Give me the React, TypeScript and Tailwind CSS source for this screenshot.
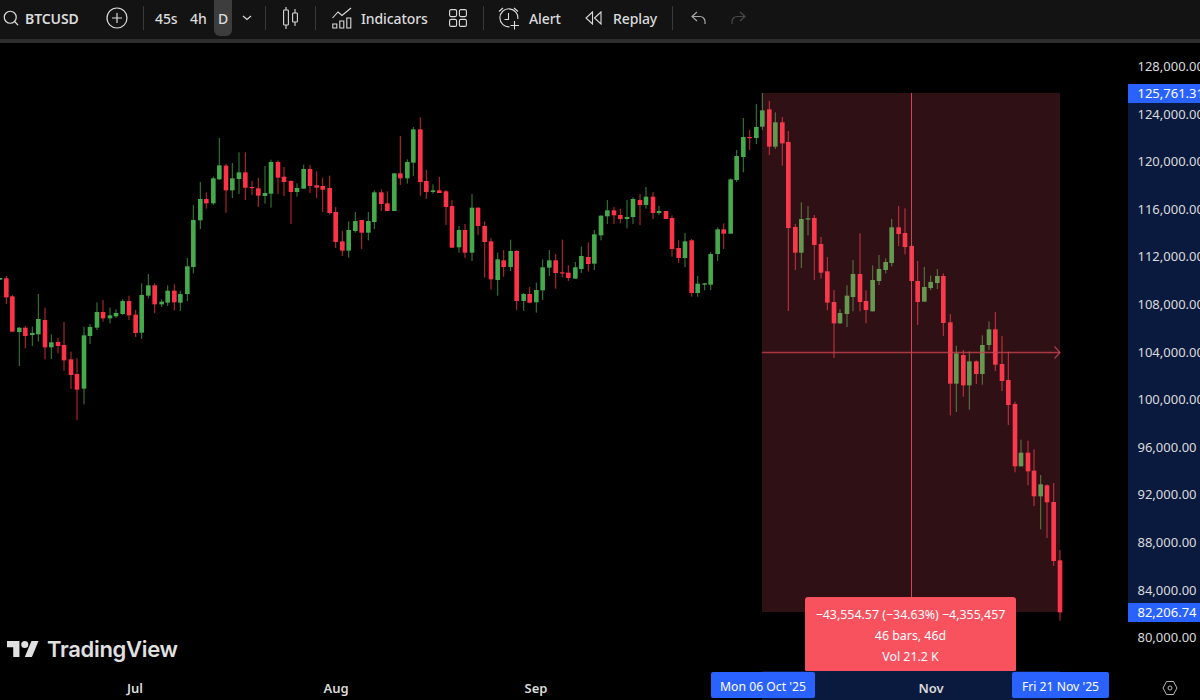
import { Search } from 'lucide-react'

type Candle = [number, 'g' | 'r', number, number, number, number]

// x, colour, wick high, body top, body bottom, wick low. Values are measured on
// 3x crops of the chart, so every group has its own crop origin.
const GROUPS: { ox: number; oy: number; rows: Candle[] }[] = [
  { ox: 0, oy: 250, rows: [
    [0,'g',84,84,89,90],[19,'r',78,85,142,162],[37,'r',135,139,245,245],[58,'g',232,233,246,348],
    [76,'r',228,233,258,295],[97,'g',230,249,255,288],[115,'g',132,207,253,275],[135,'r',173,210,292,328],
    [154,'g',253,277,292,327],[174,'r',264,276,288,310],[192,'r',216,285,331,362],[213,'r',305,328,375,417],
    [231,'r',325,372,419,510],[252,'g',230,256,416,463],[270,'g',222,231,258,282],[291,'g',157,186,233,240],
    [309,'r',150,186,205,215],[330,'g',173,196,205,220],[348,'g',178,189,199,204],[368,'g',148,153,192,195],
    [387,'r',137,153,196,210],[407,'r',180,194,249,261],[425,'g',100,135,248,267],[445,'g',72,106,137,145],
    [464,'r',100,106,163,189],[485,'g',148,155,163,171],[503,'g',106,122,158,168],[523,'r',103,122,157,181],
    [541,'g',122,132,158,183],[562,'g',24,49,132,153],
  ] },
  { ox: 180, oy: 110, rows: [
    [40,'g',285,330,471,490],[61,'g',216,267,331,357],[79,'r',247,267,280,296],[100,'g',200,205,280,285],
    [118,'g',84,166,208,210],[138,'r',162,167,241,308],[157,'g',159,205,241,264],[177,'g',127,187,207,252],
    [196,'r',127,187,233,270],[216,'r',213,231,233,255],[235,'r',204,235,257,291],[255,'g',168,249,258,281],
    [273,'g',149,156,251,293],[294,'r',151,156,203,252],[312,'r',171,200,216,258],[333,'r',211,213,246,342],
    [351,'g',220,234,246,260],[371,'g',164,177,236,236],[390,'r',165,177,228,249],[410,'r',184,226,233,264],
    [428,'r',203,228,239,306],[449,'r',197,234,309,314],[467,'r',291,306,396,414],[487,'r',363,394,422,438],
    [506,'g',334,360,422,443],[526,'g',306,333,363,368],[545,'r',330,330,368,417],[565,'g',306,333,368,391],
    [583,'g',241,247,336,357],
  ] },
  { ox: 370, oy: 110, rows: [
    [34,'r',238,247,282,303],[52,'r',244,280,303,303],[73,'g',190,190,303,303],[91,'r',78,190,205,225],
    [112,'g',148,156,205,221],[130,'g',51,58,158,198],[151,'r',22,58,216,257],[169,'r',180,213,246,267],
    [189,'g',223,241,246,251],[208,'r',201,241,249,249],[228,'r',240,244,291,345],[246,'r',270,288,413,414],
    [267,'g',348,360,412,428],[285,'r',342,360,428,444],[306,'g',252,293,428,453],[324,'r',292,293,348,375],
    [344,'r',334,348,396,503],[363,'r',384,394,508,539],[383,'g',428,448,510,557],[401,'r',420,451,471,500],
    [422,'g',389,423,471,483],[440,'r',420,423,573,600],[461,'g',549,552,573,603],[479,'r',531,552,578,580],
    [499,'g',518,540,577,608],[518,'g',448,472,541,570],[538,'g',420,451,473,498],[557,'r',432,451,489,536],
    [577,'r',389,487,489,502],[595,'r',466,488,504,513],
  ] },
  { ox: 560, oy: 90, rows: [
    [46,'g',516,532,566,566],[64,'g',470,498,537,549],[85,'r',457,501,522,544],[103,'g',420,433,521,540],
    [123,'g',376,377,436,451],[142,'g',330,361,379,402],[162,'r',351,361,376,402],[181,'r',356,375,387,400],
    [201,'g',330,381,387,415],[219,'g',322,327,381,402],[240,'r',312,330,345,405],[258,'g',291,320,345,356],
    [279,'r',306,320,369,387],[297,'g',348,363,369,375],[318,'r',363,363,387,387],[336,'r',376,384,477,500],
    [356,'r',451,474,504,519],[375,'g',429,454,504,531],[395,'r',447,451,609,620],[413,'g',558,581,609,620],
    [434,'g',579,580,584,601],[452,'g',486,492,584,600],[473,'g',412,418,492,513],[491,'r',400,418,431,477],
    [512,'g',265,268,431,431],[530,'g',180,198,270,276],[550,'g',84,141,201,247],[569,'r',120,141,144,180],
    [589,'g',42,111,144,162],
  ] },
  { ox: 755, oy: 90, rows: [
    [22,'g',9,61,110,120],[43,'r',33,58,170,195],[61,'g',67,97,170,177],[82,'r',81,97,160,227],
    [100,'r',123,156,414,663],[121,'r',402,411,488,540],[139,'g',337,387,488,534],[159,'g',348,385,387,436],
    [178,'r',375,384,465,570],[198,'r',441,462,548,566],[217,'r',501,544,638,661],[237,'r',600,636,700,804],
    [255,'g',658,669,700,702],[276,'g',586,617,672,711],[294,'g',510,552,621,664],[315,'r',430,552,636,664],
    [333,'r',601,633,660,700],[353,'g',526,570,664,664],[372,'g',495,537,573,585],[392,'g',505,516,540,550],
    [410,'g',387,412,519,529],[431,'r',348,412,432,468],[450,'r',355,429,471,493],[470,'r',462,468,573,573],
    [488,'r',513,573,636,705],
  ] },
  { ox: 910, oy: 220, rows: [
    [43,'g',141,201,245,245],[62,'g',167,186,204,210],[82,'g',147,168,189,207],[100,'r',160,168,309,348],
    [121,'r',282,307,491,586],[139,'g',377,400,491,576],[160,'r',390,405,496,530],[178,'g',394,424,496,569],
    [199,'r',421,424,462,492],[217,'g',346,375,462,494],[237,'g',304,328,375,390],[256,'r',276,328,434,453],
    [276,'r',348,432,483,513],[295,'r',395,480,555,615],
  ] },
  { ox: 1000, oy: 390, rows: [
    [45,'r',35,42,229,247],[63,'g',149,188,229,229],[84,'r',152,188,244,286],[102,'r',178,242,319,348],
    [122,'g',255,283,319,418],[141,'r',283,286,337,444],[161,'r',279,336,513,528],[180,'r',480,511,667,692],
  ] },
]

const CANDLES = GROUPS.flatMap(g =>
  g.rows.map(([x, c, hi, top, bot, lo]) => ({
    x: g.ox + x / 3,
    color: c,
    hi: g.oy + hi / 3,
    top: g.oy + top / 3,
    bot: g.oy + bot / 3,
    lo: g.oy + lo / 3,
  })),
)

const PRICES = ['128,000.00','124,000.00','120,000.00','116,000.00','112,000.00','108,000.00','104,000.00','100,000.00','96,000.00','92,000.00','88,000.00','84,000.00','80,000.00']

function Divider({ className }: { className: string }) {
  return <div className={`h-6 w-px shrink-0 bg-[#3a3a3a] ${className}`} />
}

function Toolbar() {
  return (
    <div className="flex h-[39px] shrink-0 items-center bg-[#131313] pb-[3px] pl-[3px] text-[14px] tracking-[-0.1px] text-[#dbdbdb]">
      <Search size={18} strokeWidth={1.6} className="-ml-px h-[18px] w-[18px] shrink-0" />
      <span className="ml-[5px] w-[54px] shrink-0 font-semibold">BTCUSD</span>
      <svg viewBox="0 0 22 22" className="ml-[27px] h-[22px] w-[22px] shrink-0" fill="none" stroke="currentColor" strokeWidth="1.2">
        <circle cx="11" cy="11" r="10" />
        <path d="M11 6v10M6 11h10" />
      </svg>
      <Divider className="ml-[15px]" />
      <span className="ml-[11px] w-[21px] shrink-0 font-medium">45s</span>
      <span className="ml-[14px] w-[15px] shrink-0 font-medium">4h</span>
      <span className="ml-[9px] flex h-9 w-[18px] shrink-0 items-center justify-center self-start rounded-b-md bg-[#3d3d3d] font-medium">D</span>
      <svg viewBox="0 0 10 6" className="ml-[10px] h-[6px] w-[10px] shrink-0" fill="none" stroke="currentColor" strokeWidth="1.2">
        <path d="M1 1l4 3.5L9 1" />
      </svg>
      <Divider className="ml-[13px]" />
      <svg viewBox="0 0 15 24" className="ml-[17px] h-6 w-[15px] shrink-0" fill="none" stroke="currentColor" strokeWidth="1.1">
        <rect x="0.6" y="4" width="4.8" height="15" rx="0.8" />
        <path d="M3 1v3M3 19v4" />
        <rect x="9.6" y="7" width="4.8" height="9" rx="0.8" />
        <path d="M12 3v4M12 16v4" />
      </svg>
      <Divider className="ml-[17px]" />
      <svg viewBox="0 0 20 22" className="ml-[16px] h-[22px] w-5 shrink-0" fill="none" stroke="currentColor" strokeWidth="1.1">
        <path d="M0.5 11l5.5-6 4 3.5L19 1" />
        <path d="M0.8 21v-4h4v4zM7.8 21v-7h4v7zM14.8 21v-10h4v10z" />
      </svg>
      <span className="ml-[9px] w-[66px] shrink-0 font-medium">Indicators</span>
      <svg viewBox="0 0 18 18" className="ml-[22px] h-[18px] w-[18px] shrink-0" fill="none" stroke="currentColor" strokeWidth="1.1">
        <rect x="0.6" y="0.6" width="7" height="7" rx="1.5" />
        <rect x="10.4" y="0.6" width="7" height="7" rx="1.5" />
        <rect x="0.6" y="10.4" width="7" height="7" rx="1.5" />
        <rect x="10.4" y="10.4" width="7" height="7" rx="1.5" />
      </svg>
      <Divider className="ml-[16px]" />
      <svg viewBox="0 0 22 24" className="ml-[14px] h-6 w-[22px] shrink-0" fill="none" stroke="currentColor" strokeWidth="1.1">
        <path d="M11.5 20.8A9 9 0 1 1 19.8 13" />
        <path d="M10.5 7v6.5H6.5M1 5.5L5 2M20 5.5L16 2M16.5 15v8.5M12.5 19.5h8.5" />
      </svg>
      <span className="ml-[9px] w-[33px] shrink-0 font-medium">Alert</span>
      <svg viewBox="0 0 17 14" className="ml-[23px] h-[14px] w-[17px] shrink-0" fill="none" stroke="currentColor" strokeWidth="1.1">
        <path d="M7.5 1L1 7l6.5 6zM16 1L9.5 7l6.5 6z" />
      </svg>
      <span className="ml-[11px] w-[44px] shrink-0 font-medium">Replay</span>
      <Divider className="ml-[15px]" />
      <svg viewBox="0 0 15 14" className="ml-[18px] h-[14px] w-[15px] shrink-0 text-[#a8a8a8]" fill="none" stroke="currentColor" strokeWidth="1.2">
        <path d="M6 1L1 5.5 6 10M1 5.5h8a5 5 0 0 1 5 5V13" />
      </svg>
      <svg viewBox="0 0 15 14" className="ml-[25px] h-[14px] w-[15px] shrink-0 text-[#4a4a4a]" fill="none" stroke="currentColor" strokeWidth="1.2">
        <path d="M9 1l5 4.5L9 10M14 5.5H6a5 5 0 0 0-5 5V13" />
      </svg>
    </div>
  )
}

function Chart() {
  return (
    <svg viewBox="0 43 1128 628" className="h-full w-full">
      {CANDLES.map((c, i) => {
        const fill = c.color === 'g' ? '#46a94c' : '#ff3347'
        return (
          <g key={i} fill={fill}>
            <rect x={c.x - 0.55} y={c.hi} width="1.1" height={c.lo - c.hi} opacity="0.72" />
            <rect x={c.x - 2.3} y={c.top} width="4.6" height={Math.max(c.bot - c.top, 1.2)} />
          </g>
        )
      })}
      {/* measure tool */}
      <rect x="762" y="93" width="298" height="519" fill="#ec5569" opacity="0.2" />
      <path d="M911.5 93V597" stroke="#e8505e" strokeWidth="1" opacity="0.85" />
      <path d="M762 352.5H1060" stroke="#c9424f" strokeWidth="1.6" opacity="0.8" />
      <path d="M1054.5 346.5l5.5 6-5.5 6" fill="none" stroke="#c9424f" strokeWidth="1.2" opacity="0.85" />
    </svg>
  )
}

export default function App() {
  return (
    <div className="flex h-[700px] w-[1200px] flex-col overflow-hidden bg-black font-['Noto_Sans',sans-serif]">
      <Toolbar />
      <div className="h-1 shrink-0 bg-[#2e2e2e]" />

      <div className="relative flex h-[628px] shrink-0">
        <div className="relative w-[1128px] shrink-0">
          <Chart />
          <div className="absolute left-[7px] top-[595px] flex items-center gap-[8px] text-[#e0e0e0]">
            <svg viewBox="0 0 36 18" className="h-4 w-8" fill="currentColor">
              <path d="M14 18H7V7H0V0h14zM28 18h-8L27.5 0h8z" />
              <circle cx="20" cy="4" r="4" />
            </svg>
            <span className="font-['Inter',sans-serif] text-[22px] font-semibold leading-none tracking-[-0.3px]">TradingView</span>
          </div>
        </div>

        <div className="relative w-[72px] shrink-0 overflow-hidden">
          <div className="absolute left-0 right-0 top-[60px] h-[500px] bg-[#0a1a3f]" />
          <div className="relative flex flex-col pl-[9.5px] text-[13px] text-[#dbdbdb]">
            {PRICES.map(p => (
              <div key={p} className="flex h-[47.6px] items-center whitespace-nowrap">{p}</div>
            ))}
          </div>
          <div className="absolute left-0 right-0 top-[41px] flex h-[19px] items-center whitespace-nowrap bg-[#2962ff] pl-[9.5px] text-[13px] text-white">125,761.31</div>
          <div className="absolute left-0 right-0 top-[560px] flex h-[19px] items-center whitespace-nowrap bg-[#2962ff] pl-[9.5px] text-[13px] text-white">82,206.74</div>
        </div>

        <div className="absolute left-[805px] top-[554px] flex h-[75px] w-[211px] flex-col justify-center gap-[2px] rounded-[3px] bg-[#f9525f] pt-px text-center text-[12.4px] leading-[19px] text-white">
          <div className="whitespace-nowrap">−43,554.57 (−34.63%) −4,355,457</div>
          <div>46 bars, 46d</div>
          <div>Vol 21.2 K</div>
        </div>
      </div>

      <div className="relative flex flex-1 items-center pt-[6px] text-[13px] font-semibold text-[#dbdbdb]">
        <div className="absolute bottom-0 left-[762px] top-0 w-[298px] bg-[#0a1a3f]" />
        <div className="relative ml-[35px] flex">
          <span className="w-[200px] text-center">Jul</span>
          <span className="w-[202px] text-center">Aug</span>
          <span className="w-[198px] text-center">Sep</span>
          <span className="w-[196px]" />
          <span className="w-[200px] text-center">Nov</span>
        </div>
        <div className="absolute left-[711px] top-px flex h-[26px] w-[104px] items-center justify-center rounded-[2px] bg-[#2962ff] pt-[5px] text-[12.2px] font-normal text-white">Mon 06 Oct '25</div>
        <div className="absolute left-[1012px] top-px flex h-[26px] w-[97px] items-center justify-center rounded-[2px] bg-[#2962ff] pt-[5px] text-[12.2px] font-normal text-white">Fri 21 Nov '25</div>
        <svg viewBox="0 0 16 16" className="absolute left-[1162px] top-[9px] h-4 w-4 text-[#b8b8b8]" fill="none" stroke="currentColor" strokeWidth="1">
          <path d="M4.5 1.5h7L15 8l-3.5 6.5h-7L1 8z" />
          <circle cx="8" cy="8" r="2" />
        </svg>
      </div>
    </div>
  )
}
